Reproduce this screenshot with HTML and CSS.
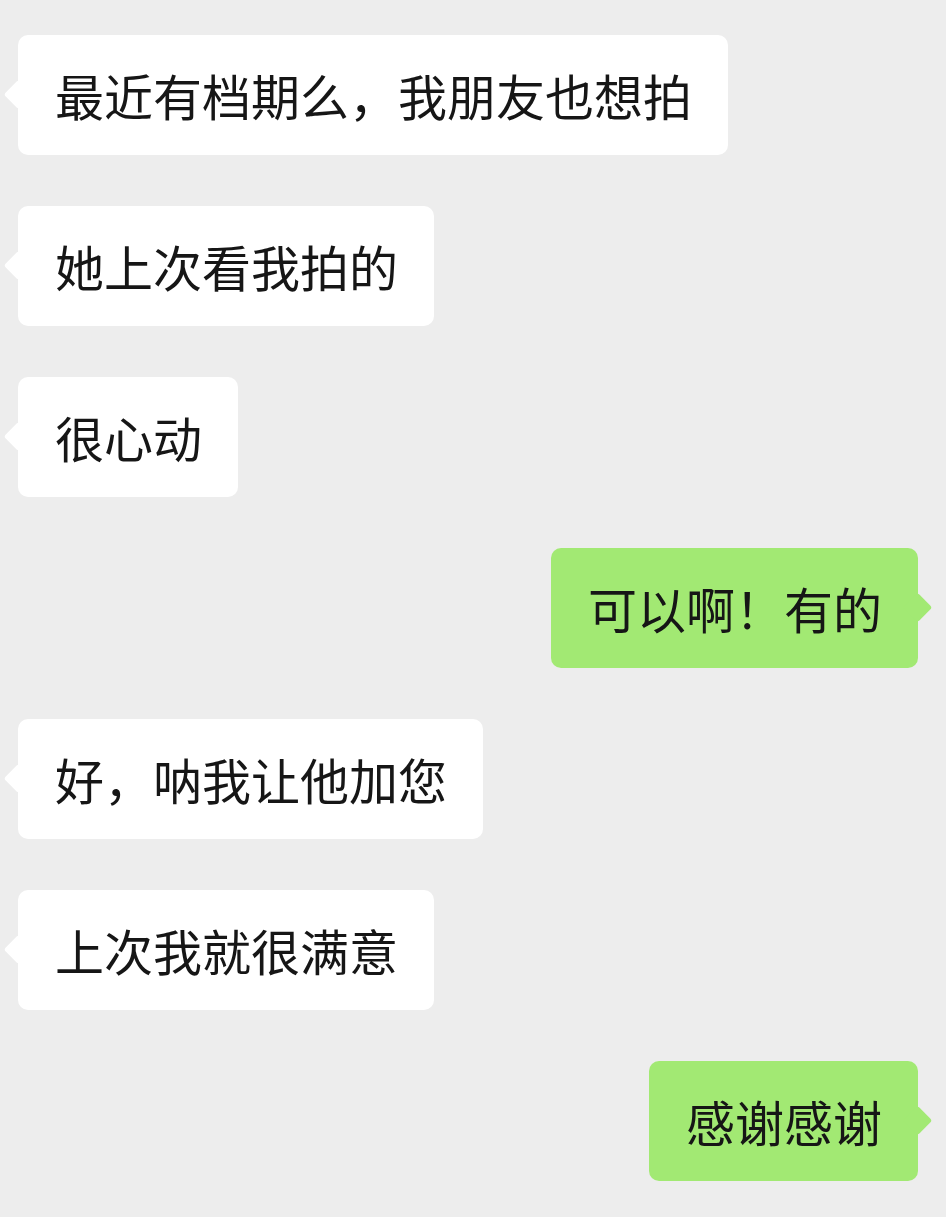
FILE: index.html
```html
<!DOCTYPE html>
<html lang="zh-CN">
<head>
    <meta charset="UTF-8">
    <meta name="viewport" content="width=device-width, initial-scale=1.0">
    <title>聊天</title>
    <link rel="stylesheet" href="styles.css">
</head>
<body>
    <div class="chat">
        <div class="row left">
            <div class="bubble">最近有档期么，我朋友也想拍</div>
        </div>
        <div class="row left">
            <div class="bubble">她上次看我拍的</div>
        </div>
        <div class="row left">
            <div class="bubble">很心动</div>
        </div>
        <div class="row right">
            <div class="bubble">可以啊！有的</div>
        </div>
        <div class="row left">
            <div class="bubble">好，呐我让他加您</div>
        </div>
        <div class="row left">
            <div class="bubble">上次我就很满意</div>
        </div>
        <div class="row right">
            <div class="bubble">感谢感谢</div>
        </div>
    </div>
</body>
</html>
```

FILE: styles.css
```css
body {
    margin: 0;
    padding: 0;
    background-color: #ededed;
    font-family: "Noto Sans CJK SC", "Noto Sans", sans-serif;
    color: #161616;
}
.chat {
    display: flex;
    flex-direction: column;
    gap: 51px;
    padding: 35px 0 36px;
}
.row {
    display: flex;
}
.row.left {
    justify-content: flex-start;
    padding-left: 18px;
}
.row.right {
    justify-content: flex-end;
    padding-right: 28px;
}
.bubble {
    position: relative;
    height: 120px;
    line-height: 120px;
    padding: 0 36px 0 37px;
    font-size: 49px;
    white-space: nowrap;
    border-radius: 10px;
    background-color: #ffffff;
}
.bubble::before {
    content: "";
    position: absolute;
    top: 50%;
    width: 21px;
    height: 21px;
    margin-top: -11px;
    border-radius: 3px;
    background-color: inherit;
    transform: rotate(45deg);
}
.left .bubble::before {
    left: -10px;
}
.right .bubble {
    background-color: #a2e973;
}
.right .bubble::before {
    right: -10px;
}
```
